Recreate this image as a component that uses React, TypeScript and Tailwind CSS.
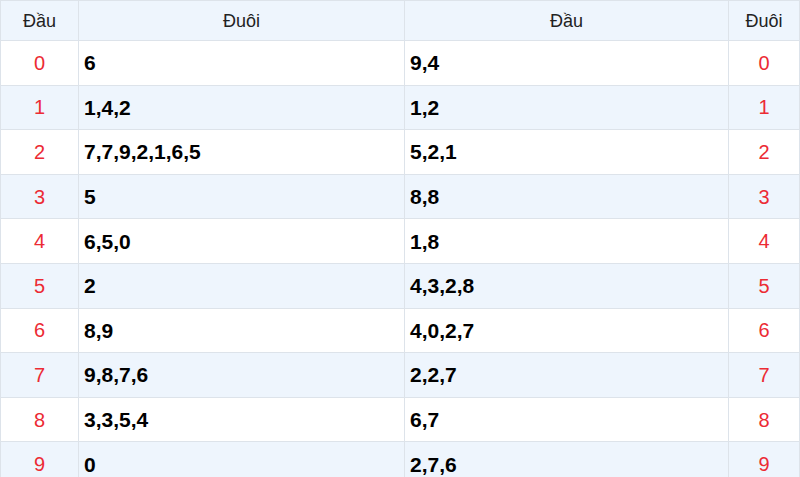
import React from 'react';

const rows: { dau: string; duoi: string; dau2: string }[] = [
  { dau: '0', duoi: '6', dau2: '9,4' },
  { dau: '1', duoi: '1,4,2', dau2: '1,2' },
  { dau: '2', duoi: '7,7,9,2,1,6,5', dau2: '5,2,1' },
  { dau: '3', duoi: '5', dau2: '8,8' },
  { dau: '4', duoi: '6,5,0', dau2: '1,8' },
  { dau: '5', duoi: '2', dau2: '4,3,2,8' },
  { dau: '6', duoi: '8,9', dau2: '4,0,2,7' },
  { dau: '7', duoi: '9,8,7,6', dau2: '2,2,7' },
  { dau: '8', duoi: '3,3,5,4', dau2: '6,7' },
  { dau: '9', duoi: '0', dau2: '2,7,6' },
];

const App: React.FC = () => {
  return (
    <div className="w-[800px] h-[477px] overflow-hidden bg-white font-['Liberation_Sans',Arial,sans-serif]">
      <table className="w-full border-collapse table-fixed">
        <colgroup>
          <col className="w-[78px]" />
          <col className="w-[326px]" />
          <col className="w-[324px]" />
          <col />
        </colgroup>
        <thead>
          <tr className="h-[40px] bg-[#eef5fd] text-[18px] leading-none text-[#222]">
            <th className="border border-[#dde3ea] font-normal">Đầu</th>
            <th className="border border-[#dde3ea] font-normal">Đuôi</th>
            <th className="border border-[#dde3ea] font-normal">Đầu</th>
            <th className="border border-[#dde3ea] font-normal">Đuôi</th>
          </tr>
        </thead>
        <tbody>
          {rows.map((r, i) => (
            <tr key={r.dau} className={`h-[44.6px] leading-none ${i % 2 === 1 ? 'bg-[#eef5fd]' : 'bg-white'}`}>
              <td className="border border-[#dde3ea] text-center text-[20px] text-[#ec2b34]">{r.dau}</td>
              <td className="border border-[#dde3ea] px-[5px] text-[21px] font-bold text-black">{r.duoi}</td>
              <td className="border border-[#dde3ea] px-[5px] text-[21px] font-bold text-black">{r.dau2}</td>
              <td className="border border-[#dde3ea] text-center text-[20px] text-[#ec2b34]">{r.dau}</td>
            </tr>
          ))}
        </tbody>
      </table>
    </div>
  );
};

export default App;
